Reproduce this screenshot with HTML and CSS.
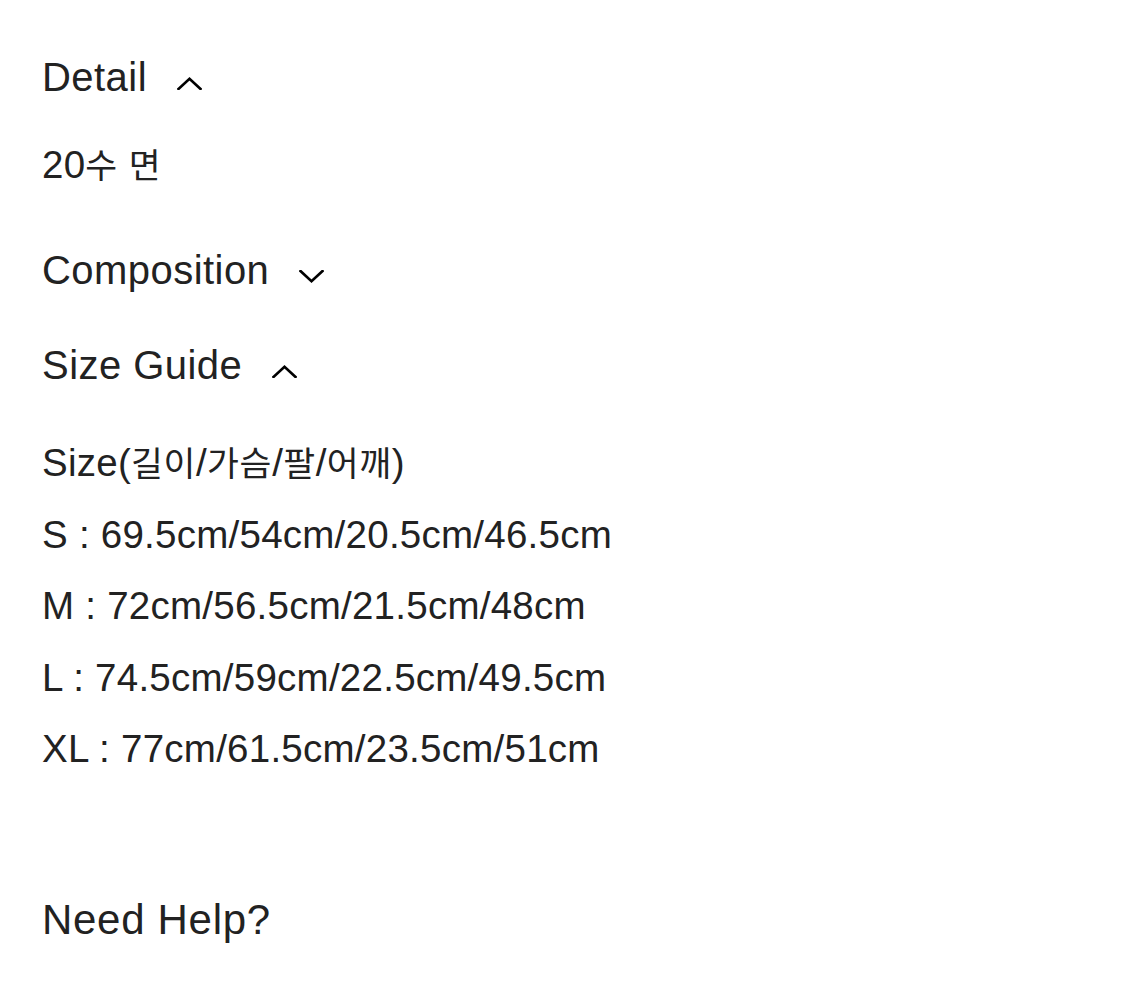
FILE: index.html
```html
<!DOCTYPE html>
<html lang="ko">
<head>
<meta charset="utf-8">
<link rel="stylesheet" href="styles.css">
</head>
<body>
<main class="info">
  <section class="acc acc-detail">
    <h2 class="acc-head">Detail<svg class="chev" viewBox="0 0 25 13" width="25" height="13"><path d="M1.5 12 L12.5 1.8 L23.5 12"/></svg></h2>
    <p class="acc-body line">20<span class="ko">수</span> <span class="ko">면</span></p>
  </section>
  <section class="acc acc-comp">
    <h2 class="acc-head">Composition<svg class="chev" viewBox="0 0 25 13" width="25" height="13"><path d="M1.5 1 L12.5 11.2 L23.5 1"/></svg></h2>
  </section>
  <section class="acc acc-size">
    <h2 class="acc-head">Size Guide<svg class="chev" viewBox="0 0 25 13" width="25" height="13"><path d="M1.5 12 L12.5 1.8 L23.5 12"/></svg></h2>
    <ul class="size-list">
      <li class="line">Size(<span class="ko">길이</span>/<span class="ko">가슴</span>/<span class="ko">팔</span>/<span class="ko">어깨</span>)</li>
      <li class="line">S : 69.5cm/54cm/20.5cm/46.5cm</li>
      <li class="line">M : 72cm/56.5cm/21.5cm/48cm</li>
      <li class="line">L : 74.5cm/59cm/22.5cm/49.5cm</li>
      <li class="line">XL : 77cm/61.5cm/23.5cm/51cm</li>
    </ul>
  </section>
  <h2 class="help">Need Help?</h2>
</main>
</body>
</html>
```
FILE: styles.css
```css
html, body {
  margin: 0;
  padding: 0;
  background: #ffffff;
}

body {
  font-family: "Liberation Sans", Arial, "Noto Sans CJK KR", sans-serif;
  color: #222222;
}

.info {
  padding: 47px 0 0 42px;
  display: flex;
  flex-direction: column;
}

.acc {
  display: flex;
  flex-direction: column;
}

.acc-head {
  margin: 0;
  font-weight: 400;
  font-size: 40px;
  line-height: 60px;
  letter-spacing: 0.45px;
  display: flex;
  align-items: flex-end;
}

.chev {
  margin-left: 30px;
  margin-bottom: 17px;
  fill: none;
  stroke: #000000;
  stroke-width: 2.6;
  stroke-linecap: square;
  stroke-linejoin: miter;
}

.line {
  font-size: 38.5px;
  line-height: 71.5px;
  letter-spacing: 0.25px;
}

.ko {
  font-family: "Noto Sans CJK KR", sans-serif;
  font-size: 0.9em;
  letter-spacing: 0.02em;
}

.acc-body {
  margin: 21px 0 0 0;
}

.acc-comp {
  margin-top: 39.5px;
}

.acc-size {
  margin-top: 35px;
}

.size-list {
  list-style: none;
  margin: 31px 0 0 0;
  padding: 0;
}

.help {
  margin: 105px 0 0 0;
  font-weight: 400;
  font-size: 42px;
  line-height: 60px;
  letter-spacing: 0.7px;
}
```
